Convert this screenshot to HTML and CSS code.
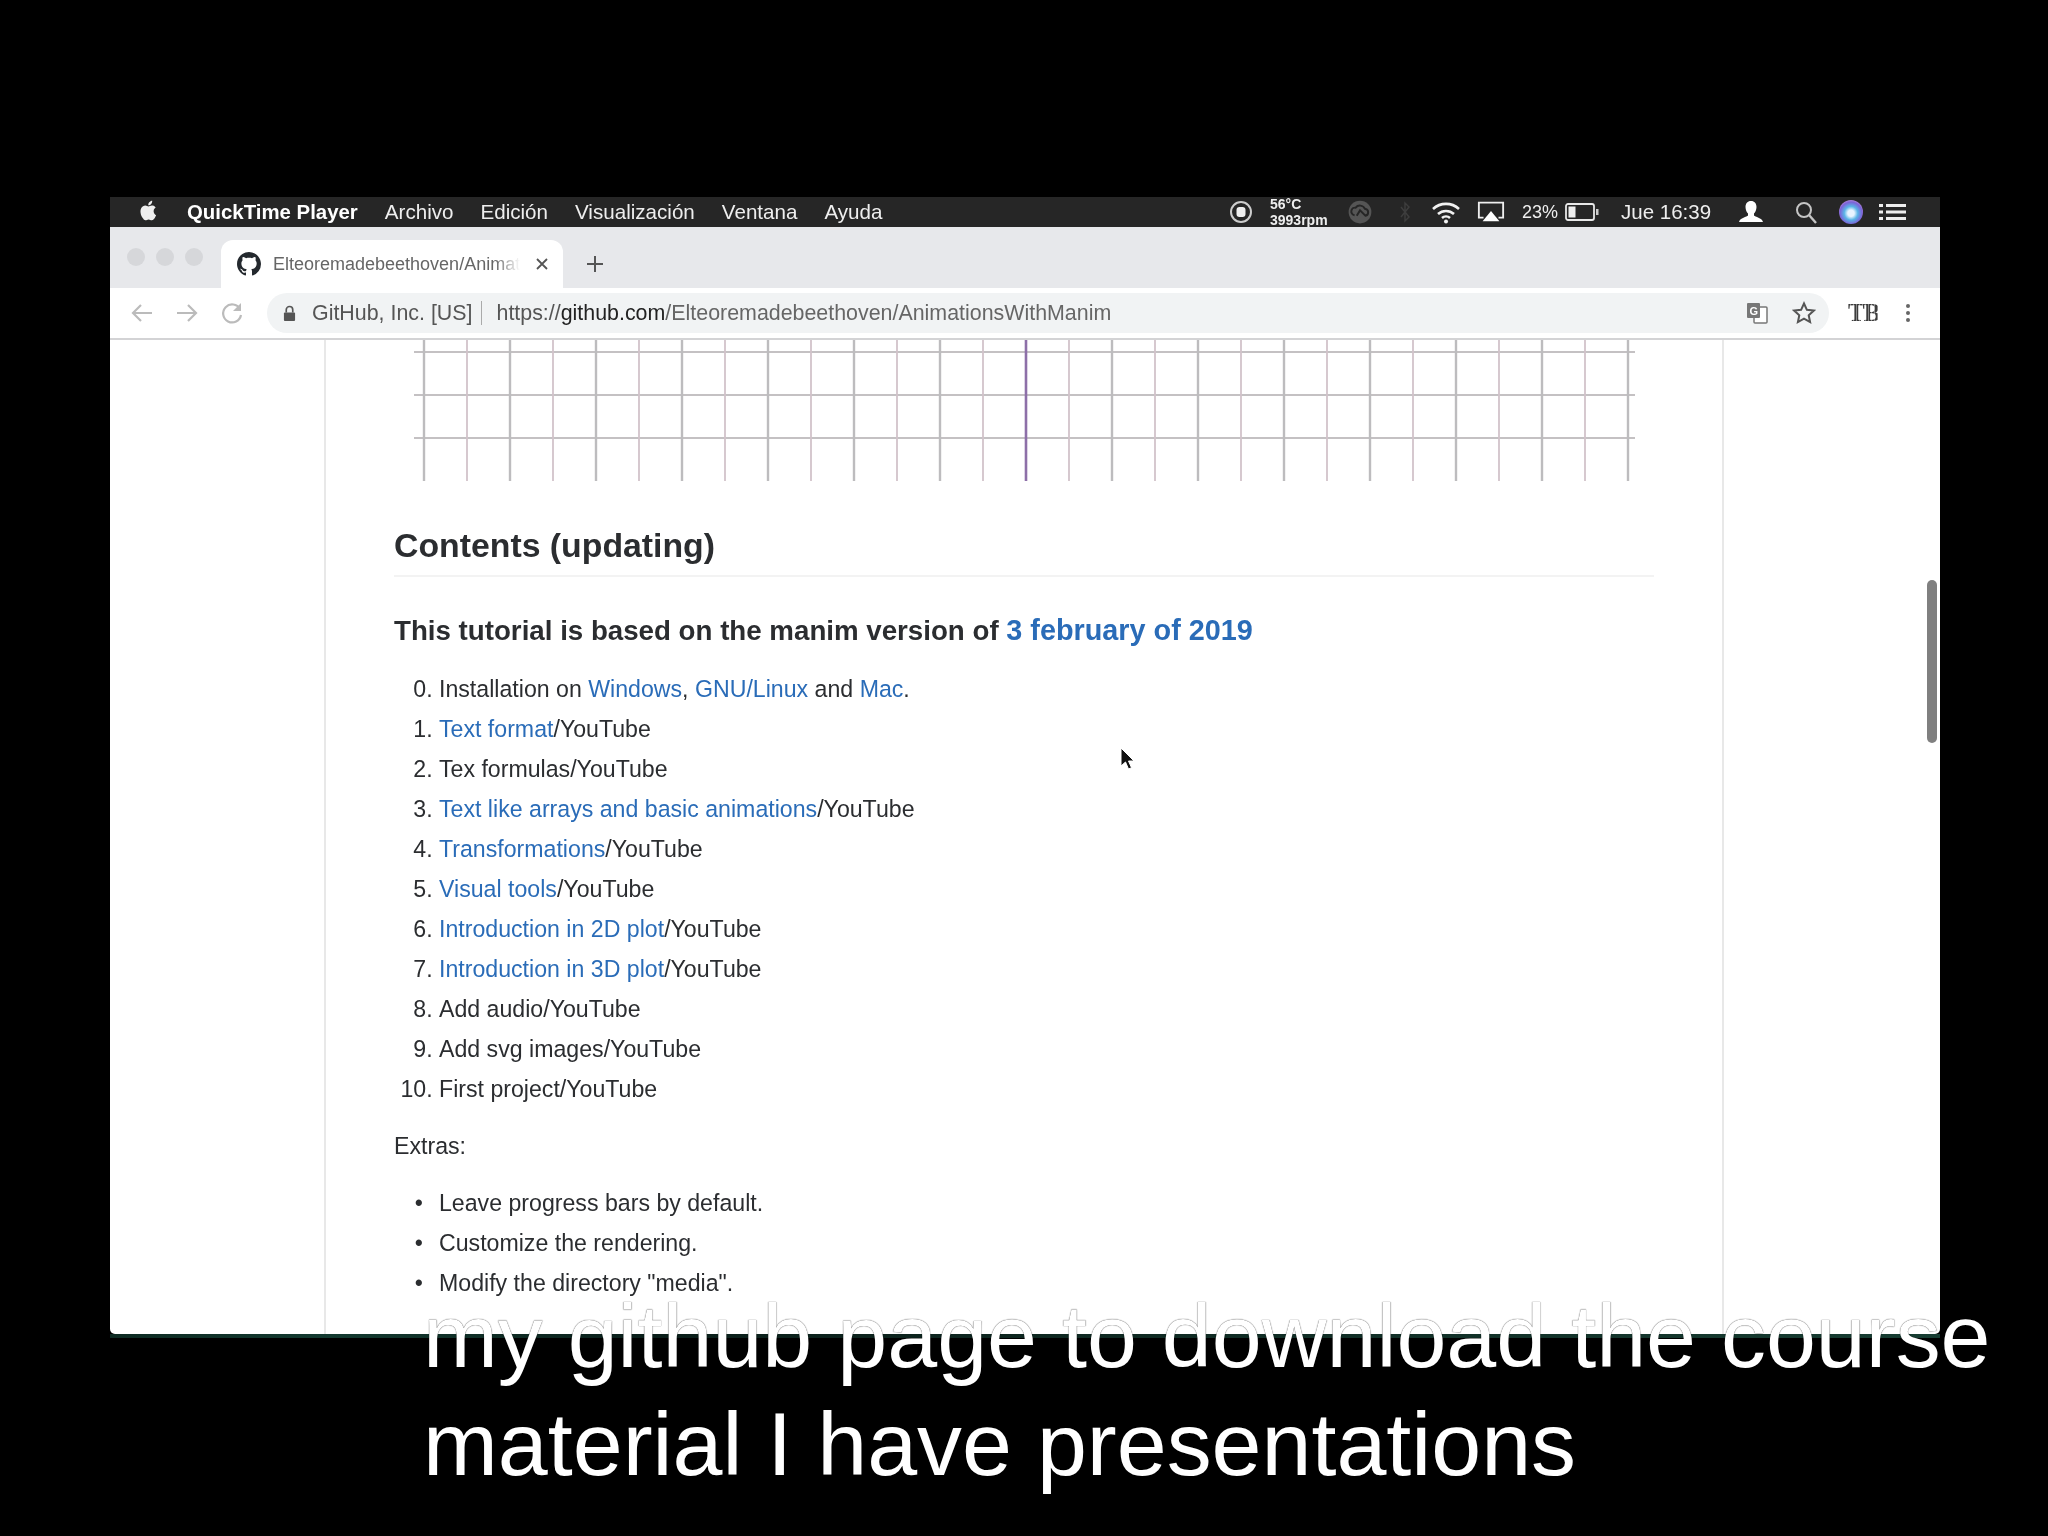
FILE: index.html
```html
<!DOCTYPE html>
<html lang="en">
<head>
<meta charset="utf-8">
<title>QuickTime recording of a GitHub page</title>
<link rel="stylesheet" href="styles.css">
</head>
<body>
<div class="window">
  <header class="menubar">
    <svg class="apple" viewBox="0 0 20 24"><path d="M14.6 12.7c0-2.4 2-3.6 2.1-3.7-1.1-1.700-2.900-1.900-3.500-1.900-1.500-.2-2.900.9-3.700.9-.8 0-1.900-.9-3.200-.9-1.600 0-3.100 1-4 2.400-1.700 3-.4 7.400 1.200 9.800.8 1.200 1.800 2.500 3 2.400 1.200 0 1.700-.8 3.100-.8 1.500 0 1.900.8 3.200.8 1.300 0 2.200-1.200 3-2.300.9-1.400 1.300-2.700 1.300-2.800-.1 0-2.500-1-2.500-3.900zM12.200 5.400c.7-.8 1.100-1.900 1-3.100-1 0-2.200.7-2.900 1.500-.6.7-1.200 1.900-1 3 1.100.1 2.200-.6 2.900-1.400z"/></svg>
    <strong class="app-name">QuickTime Player</strong>
    <nav class="menus"><span>Archivo</span><span>Edición</span><span>Visualización</span><span>Ventana</span><span>Ayuda</span></nav>
    <div class="status">
      <svg class="st st-rec" viewBox="0 0 24 24"><circle cx="12" cy="12" r="10" fill="none" stroke="#ccc" stroke-width="2"/><rect x="7.500" y="7" width="9" height="10" rx="3" fill="#eee"/></svg>
      <div class="temp"><span>56°C</span><span>3993rpm</span></div>
      <svg class="st st-cc" viewBox="0 0 24 24"><circle cx="12" cy="12" r="10.500" fill="#555"/><path d="M7 15a3.500 3.500 0 0 1 1-7 5 5 0 0 1 8.500 1 3.300 3.300 0 0 1 .5 6.500l-5-5-3 5" fill="none" stroke="#262626" stroke-width="1.800"/></svg>
      <svg class="st st-bt" viewBox="0 0 12 24"><path d="M2 7l8 10-4 4V3l4 4-8 10" fill="none" stroke="#3d3d3d" stroke-width="1.500"/></svg>
      <svg class="st st-wifi" viewBox="0 0 30 24"><g fill="none" stroke="#f2f2f2" stroke-width="2.600"><path d="M2 9a19 19 0 0 1 26 0"/><path d="M7 14a12 12 0 0 1 16 0"/><path d="M11 18a6 6 0 0 1 8 0"/></g><circle cx="15" cy="21.500" r="2" fill="#f2f2f2"/></svg>
      <svg class="st st-air" viewBox="0 0 30 24"><path d="M7 18H2V2h26v16h-5" fill="none" stroke="#eee" stroke-width="2"/><path d="M15 11l9 11H6z" fill="#fff"/></svg>
      <span class="pct">23%</span>
      <svg class="st st-bat" viewBox="0 0 34 20"><rect x="1" y="2" width="28" height="16" rx="2" fill="none" stroke="#e8e8e8" stroke-width="1.800"/><rect x="3.500" y="4.500" width="7" height="11" fill="#eee"/><rect x="31" y="7" width="2.500" height="6" fill="#ccc"/></svg>
      <span class="clock">Jue 16:39</span>
      <svg class="st st-user" viewBox="0 0 26 24"><path d="M13 1c3.500 0 5.500 2.600 5.500 6 0 3-1.300 5.300-2.500 6.500v2c1 1.700 8 2 9 6.500H1c1-4.500 8-4.800 9-6.500v-2C8.800 12.300 7.500 10 7.500 7c0-3.400 2-6 5.500-6z" fill="#fff"/></svg>
      <svg class="st st-search" viewBox="0 0 24 24"><circle cx="10" cy="10" r="7" fill="none" stroke="#c4c4c4" stroke-width="2"/><path d="M15 15l7 8" stroke="#c4c4c4" stroke-width="2.400"/></svg>
      <div class="siri"></div>
      <svg class="st st-list" viewBox="0 0 28 20"><g fill="#eee"><rect x="0" y="2" width="4" height="3"/><rect x="0" y="8.500" width="4" height="3"/><rect x="0" y="15" width="4" height="3"/><rect x="7" y="2" width="20" height="3"/><rect x="7" y="8.500" width="20" height="3"/><rect x="7" y="15" width="20" height="3"/></g></svg>
    </div>
  </header>

  <div class="tabstrip">
    <div class="lights"><i></i><i></i><i></i></div>
    <div class="tab">
      <svg class="favicon" viewBox="0 0 16 16"><path d="M8 0C3.580 0 0 3.580 0 8c0 3.540 2.290 6.530 5.470 7.590.4.070.55-.17.55-.38 0-.19-.01-.82-.01-1.490-2.010.37-2.530-.49-2.690-.94-.09-.23-.48-.94-.82-1.130-.28-.15-.68-.52-.01-.53.63-.01 1.080.58 1.230.82.72 1.210 1.870.87 2.330.66.07-.52.28-.87.51-1.070-1.780-.2-3.640-.89-3.640-3.950 0-.87.31-1.590.82-2.150-.08-.2-.36-1.020.08-2.120 0 0 .67-.21 2.200.82.64-.18 1.320-.27 2-.27.68 0 1.360.09 2 .27 1.530-1.040 2.200-.82 2.200-.82.44 1.100.16 1.920.08 2.120.51.56.82 1.270.82 2.150 0 3.070-1.870 3.750-3.650 3.950.29.25.54.73.54 1.480 0 1.070-.01 1.930-.01 2.200 0 .21.15.46.55.38A8.013 8.013 0 0016 8c0-4.420-3.580-8-8-8z"/></svg>
      <span class="tab-title">Elteoremadebeethoven/AnimationsWithManim</span>
      <svg class="tab-x" viewBox="0 0 14 14"><path d="M2 2l10 10M12 2L2 12" stroke="#555" stroke-width="1.800"/></svg>
    </div>
    <svg class="newtab" viewBox="0 0 18 18"><path d="M9 1v16M1 9h16" stroke="#555" stroke-width="2"/></svg>
  </div>

  <div class="toolbar">
    <svg class="nav" viewBox="0 0 24 24"><path d="M22 12H3M11 4l-8 8 8 8" fill="none" stroke="#bbb" stroke-width="2.200"/></svg>
    <svg class="nav" viewBox="0 0 24 24"><path d="M2 12h19M13 4l8 8-8 8" fill="none" stroke="#bbb" stroke-width="2.200"/></svg>
    <svg class="nav" viewBox="0 0 24 24"><path d="M20 8a9 9 0 1 0 1 6" fill="none" stroke="#bbb" stroke-width="2.200"/><path d="M21 2v8h-8z" fill="#bbb"/></svg>
    <div class="omnibox">
      <svg class="lock" viewBox="0 0 14 18"><path d="M3.500 8V5a3.500 3.500 0 0 1 7 0v3" fill="none" stroke="#555" stroke-width="1.800"/><rect x="1" y="8" width="12" height="9" rx="1" fill="#555"/></svg>
      <span class="origin">GitHub, Inc. [US]</span>
      <span class="url"><span class="scheme">https://</span><span class="domain">github.com</span>/Elteoremadebeethoven/AnimationsWithManim</span>
      <svg class="translate" viewBox="0 0 22 22"><rect x="8" y="5" width="13" height="16" rx="1" fill="#fff" stroke="#777" stroke-width="1.500"/><rect x="1" y="1" width="13" height="15" rx="1" fill="#777"/><text x="3.500" y="13" class="translate-g">G</text></svg>
      <svg class="star" viewBox="0 0 24 24"><path d="M12 2.500l2.900 6.300 6.900.8-5.100 4.700 1.400 6.800-6.100-3.400-6.100 3.400 1.400-6.800L2.200 9.600l6.900-.8z" fill="none" stroke="#555" stroke-width="2"/></svg>
    </div>
    <span class="ext">TB</span>
    <svg class="more" viewBox="0 0 6 20"><circle cx="3" cy="3" r="2" fill="#666"/><circle cx="3" cy="10" r="2" fill="#666"/><circle cx="3" cy="17" r="2" fill="#666"/></svg>
  </div>

  <main class="page">
    <article class="readme">
      <svg class="plot" viewBox="0 0 1260 141">
        <path class="h" d="M20 12H1241M20 55H1241M20 98H1241"/>
        <path class="v" d="M30 0V141M116 0V141M202 0V141M288 0V141M374 0V141M460 0V141M546 0V141M718 0V141M804 0V141M890 0V141M976 0V141M1062 0V141M1148 0V141M1234 0V141"/>
        <path class="p" d="M73 0V141M159 0V141M245 0V141M331 0V141M417 0V141M503 0V141M589 0V141M675 0V141M761 0V141M847 0V141M933 0V141M1019 0V141M1105 0V141M1191 0V141"/>
        <path class="axis" d="M632 0V141"/>
      </svg>
      <h2>Contents (updating)</h2>
      <h3>This tutorial is based on the manim version of <a href="#">3 february of 2019</a></h3>
      <ol>
        <li value="0">Installation on <a href="#">Windows</a>, <a href="#">GNU/Linux</a> and <a href="#">Mac</a>.</li>
        <li><a href="#">Text format</a>/YouTube</li>
        <li>Tex formulas/YouTube</li>
        <li><a href="#">Text like arrays and basic animations</a>/YouTube</li>
        <li><a href="#">Transformations</a>/YouTube</li>
        <li><a href="#">Visual tools</a>/YouTube</li>
        <li><a href="#">Introduction in 2D plot</a>/YouTube</li>
        <li><a href="#">Introduction in 3D plot</a>/YouTube</li>
        <li>Add audio/YouTube</li>
        <li>Add svg images/YouTube</li>
        <li>First project/YouTube</li>
      </ol>
      <p>Extras:</p>
      <ul>
        <li>Leave progress bars by default.</li>
        <li>Customize the rendering.</li>
        <li>Modify the directory "media".</li>
      </ul>
    </article>
    <div class="scrollthumb"></div>
    <svg class="cursor" viewBox="0 0 14 24"><path d="M1 1v18l4.500-4 3 7 3-1.300-3-6.700H14z" fill="#111" stroke="#fff" stroke-width="1"/></svg>
  </main>
</div>
<div class="window-glow"></div>
<p class="caption">my github page to download the course<br>material I have presentations</p>
</body>
</html>
```

FILE: styles.css
```css
* { box-sizing: border-box; }
html, body { margin: 0; height: 1536px; overflow: hidden; }
body {
  position: relative;
  background: #000;
  padding: 197px 108px 0 110px;
  font-family: "Liberation Sans", Arial, sans-serif;
  color: #2b2d30;
}
.window {
  width: 1830px;
  height: 1137px;
  display: flex;
  flex-direction: column;
  background: #fff;
  overflow: hidden;
  border-radius: 0 0 5px 5px;
  filter: blur(.7px);
}
.window-glow {
  width: 1830px;
  height: 4px;
  background: linear-gradient(90deg, #0d2a22, #133a30 12%, #0a1e19 30%, #173d32);
}

/* menu bar */
.menubar {
  flex: 0 0 30px;
  min-height: 0;
  display: flex;
  align-items: center;
  background: #262626;
  color: #eee;
  font-size: 20.600px;
  padding-left: 29px;
  white-space: nowrap;
}
.apple { width: 20px; height: 25px; fill: #eee; margin-right: 28px; margin-top: -3px; }
.app-name { font-size: 20.400px; color: #fff; margin-right: 27px; }
.menus { display: flex; gap: 27px; }
.status { margin-left: auto; display: flex; align-items: center; padding-right: 33px; }
.st { display: block; flex: none; }
.st-rec { width: 24px; height: 24px; margin-right: 17px; }
.temp { display: flex; flex-direction: column; width: 60px; font-size: 14px; line-height: 16px; font-weight: bold; margin-right: 17px; }
.st-cc { width: 26px; height: 26px; margin-right: 26px; }
.st-bt { width: 12px; height: 24px; margin-right: 19px; }
.st-wifi { width: 32px; height: 24px; margin-right: 15px; }
.st-air { width: 28px; height: 24px; margin-right: 17px; }
.pct { width: 36px; font-size: 18px; margin-right: 7px; }
.st-bat { width: 34px; height: 20px; margin-right: 22px; }
.clock { font-size: 20.500px; width: 90px; margin-right: 27px; }
.st-user { width: 26px; height: 24px; margin-right: 30px; }
.st-search { width: 24px; height: 24px; margin-right: 21px; }
.siri {
  width: 24px; height: 24px; border-radius: 50%;
  background: radial-gradient(circle at 50% 55%, #e8f4ff 0 18%, #5ab4e6 38%, #7c63d8 62%, #d9a0d8 85%, #f4f4f4 100%);
  margin-right: 16px;
}
.st-list { width: 28px; height: 20px; }

/* tab strip */
.tabstrip {
  flex: 0 0 61px;
  display: flex;
  align-items: flex-end;
  background: #e7e8eb;
  padding-left: 17px;
}
.lights { display: flex; gap: 11px; align-self: flex-start; margin-top: 21px; margin-right: 18px; }
.lights i { width: 18px; height: 18px; border-radius: 50%; background: #d6d7da; }
.tab {
  width: 342px;
  height: 48px;
  background: #fff;
  border-radius: 12px 12px 0 0;
  display: flex;
  align-items: center;
  padding: 0 16px;
}
.favicon { width: 24px; height: 24px; fill: #24292e; flex: none; margin-right: 12px; }
.tab-title {
  width: 247px;
  flex: none;
  overflow: hidden;
  white-space: nowrap;
  font-size: 18px;
  color: #666;
  -webkit-mask-image: linear-gradient(90deg, #000 90%, transparent);
  mask-image: linear-gradient(90deg, #000 90%, transparent);
}
.tab-x { width: 14px; height: 14px; margin-left: 15px; flex: none; }
.newtab { width: 18px; height: 18px; margin: 0 0 15px 23px; }

/* toolbar */
.toolbar {
  flex: 0 0 52px;
  display: flex;
  align-items: center;
  background: #fff;
  border-bottom: 2px solid #d3d3d5;
  padding: 0 27px 0 20px;
}
.nav { width: 24px; height: 24px; margin-right: 21px; flex: none; }
.omnibox {
  flex: 0 0 1562px;
  height: 40px;
  margin-left: 2px;
  border-radius: 20px;
  background: #f1f3f4;
  display: flex;
  align-items: center;
  padding: 0 13px 0 16px;
  font-size: 21.400px;
  color: #666;
  white-space: nowrap;
}
.lock { width: 13px; height: 17px; flex: none; margin-right: 16px; }
.origin { color: #555; padding-right: 9px; border-right: 1.500px solid #aaa; margin-right: 14px; line-height: 24px; }
.scheme { color: #555; }
.domain { color: #222; }
.translate { width: 22px; height: 22px; margin-left: auto; margin-right: 24px; }
.translate-g { font-size: 11px; font-weight: bold; fill: #fff; }
.star { width: 24px; height: 24px; }
.ext {
  margin-left: 19px;
  font: bold 25px "Liberation Serif", serif;
  letter-spacing: -1px;
  width: 30px;
  color: transparent;
  background: repeating-linear-gradient(90deg, #3c3c3c 0 2px, #8a8a8a 2px 3px);
  -webkit-background-clip: text;
  background-clip: text;
}
.more { width: 6px; height: 20px; margin-left: 27px; flex: none; }

/* page */
.page { flex: 1; position: relative; overflow: hidden; padding-left: 214px; }
.readme {
  width: 1400px;
  height: 100%;
  border-left: 2px solid #e8e8e8;
  border-right: 2px solid #e8e8e8;
  padding: 0 68px;
  font-size: 23.150px;
  line-height: 40px;
}
.plot { display: block; width: 1260px; height: 141px; fill: none; }
.plot .h { stroke: #c4c1c3; stroke-width: 2; }
.plot .v { stroke: #bdbcbe; stroke-width: 2.400; }
.plot .p { stroke: #d2c3ca; stroke-width: 1.800; }
.plot .axis { stroke: #8d6fa8; stroke-width: 2.600; }
h2 {
  margin: 41px 0 0;
  padding-bottom: 7px;
  border-bottom: 2px solid #f3f3f3;
  font-size: 33.800px;
  line-height: 46px;
}
h3 {
  margin: 33px 0 0;
  font-size: 27.700px;
  line-height: 40px;
}
h3 a { font-size: 1.040em; }
a { color: #2a6cb8; text-decoration: none; }
ol, ul { margin: 0; padding: 0 0 0 45px; }
ol { margin-top: 18px; }
p { margin: 17px 0 18px; }
ul { margin-top: -1px; }
ul li::marker { content: "•\2002\2009"; }
.scrollthumb {
  position: absolute;
  top: 240px; right: 3px;
  width: 10px; height: 163px;
  border-radius: 5px;
  background: #808080;
}
.cursor { position: absolute; left: 1010px; top: 407px; width: 14px; height: 24px; }

/* subtitle */
.caption {
  position: absolute;
  left: 423px;
  top: 1282px;
  margin: 0;
  font-size: 89.800px;
  line-height: 108px;
  color: #fff;
  white-space: nowrap;
  text-shadow: 0 0 1px #000;
}
```
